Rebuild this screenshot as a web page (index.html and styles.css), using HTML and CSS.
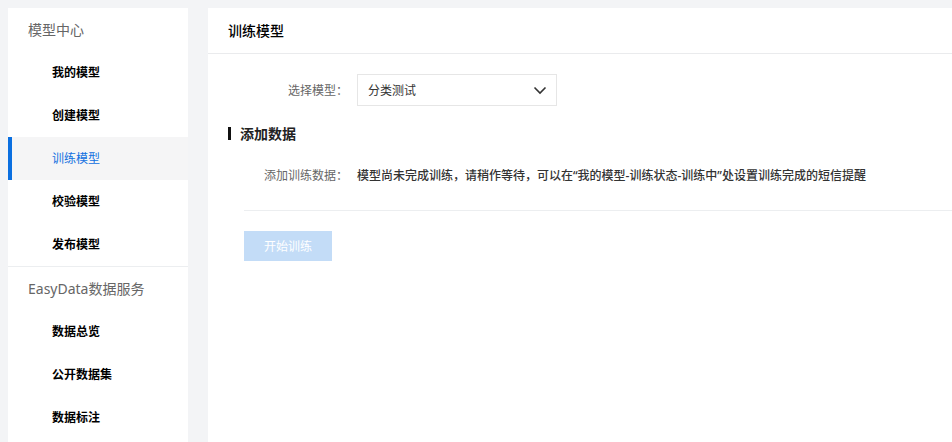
FILE: index.html
```html
<!DOCTYPE html>
<html lang="zh-CN">
<head>
    <meta charset="UTF-8">
    <meta name="viewport" content="width=device-width, initial-scale=1.0">
    <title>训练模型</title>
    <link rel="stylesheet" href="styles.css">
</head>
<body>
    <div class="layout">
        <aside class="sidebar">
            <div class="nav-group">
                <div class="nav-title">模型中心</div>
                <a class="nav-item">我的模型</a>
                <a class="nav-item">创建模型</a>
                <a class="nav-item active">训练模型</a>
                <a class="nav-item">校验模型</a>
                <a class="nav-item">发布模型</a>
            </div>
            <div class="nav-group">
                <div class="nav-title">EasyData数据服务</div>
                <a class="nav-item">数据总览</a>
                <a class="nav-item">公开数据集</a>
                <a class="nav-item">数据标注</a>
            </div>
        </aside>

        <main class="main">
            <div class="main-header">训练模型</div>
            <div class="main-body">
                <div class="form-row">
                    <label class="form-label">选择模型：</label>
                    <div class="select">
                        <span>分类测试</span>
                        <svg width="14" height="14" viewBox="0 0 14 14">
                            <path d="M1.5 4.5 L7 10 L12.5 4.5" fill="none" stroke="#333" stroke-width="1.6"/>
                        </svg>
                    </div>
                </div>

                <h2 class="section-title">添加数据</h2>

                <div class="form-row info-row">
                    <label class="form-label">添加训练数据：</label>
                    <div class="info-text">模型尚未完成训练，请稍作等待，可以在“我的模型-训练状态-训练中”处设置训练完成的短信提醒</div>
                </div>

                <div class="divider"></div>

                <button class="btn-start" disabled>开始训练</button>
            </div>
        </main>
    </div>
</body>
</html>
```

FILE: styles.css
```css
* {
    box-sizing: border-box;
    margin: 0;
    padding: 0;
    font-family: "Noto Sans", "Noto Sans CJK SC", sans-serif;
}

body {
    background: #f3f4f6;
    color: #333;
    padding: 8px 0 0 8px;
    height: 442px;
    overflow: hidden;
}

.layout {
    display: flex;
    gap: 20px;
    height: 100%;
}

.sidebar {
    width: 180px;
    flex-shrink: 0;
    background: white;
}

.nav-group + .nav-group {
    border-top: 1px solid #eceef0;
}

.nav-title {
    height: 43px;
    line-height: 43px;
    padding-left: 20px;
    font-size: 14px;
    color: #666;
}

.nav-item {
    display: block;
    height: 43px;
    line-height: 43px;
    padding-left: 44px;
    font-size: 12px;
    font-weight: bold;
    color: #000;
    cursor: pointer;
}

.nav-item.active {
    background: #f5f5f6;
    color: #1070e0;
    font-weight: normal;
    box-shadow: inset 4px 0 0 #0a6fe0;
}

.main {
    flex: 1;
    background: white;
}

.main-header {
    height: 46px;
    line-height: 46px;
    padding-left: 20px;
    font-size: 14px;
    font-weight: 500;
    color: #000;
    border-bottom: 1px solid #eaebed;
}

.main-body {
    padding: 20px 0 0 36px;
}

.form-row {
    display: flex;
    align-items: center;
}

.form-label {
    width: 113px;
    padding-right: 9px;
    text-align: right;
    font-size: 12px;
    color: #666;
    white-space: nowrap;
}

.select {
    width: 200px;
    height: 32px;
    border: 1px solid #e6e6e6;
    display: flex;
    align-items: center;
    justify-content: space-between;
    padding: 0 9px 0 10px;
    font-size: 12px;
    color: #333;
}

.select svg {
    display: block;
}

.section-title {
    margin: 21px 0 0 -16px;
    padding-left: 9px;
    border-left: 3px solid #111;
    height: 13px;
    line-height: 13px;
    font-size: 14px;
    font-weight: bold;
    color: #222;
}

.info-row {
    margin-top: 26px;
}

.info-text {
    font-size: 12px;
    font-weight: 500;
    color: #333;
}

.divider {
    height: 1px;
    background: #eceef0;
    margin-top: 26px;
}

.btn-start {
    margin-top: 20px;
    width: 88px;
    height: 30px;
    border: none;
    background: #c3dcf7;
    color: white;
    font-size: 12px;
}
```
